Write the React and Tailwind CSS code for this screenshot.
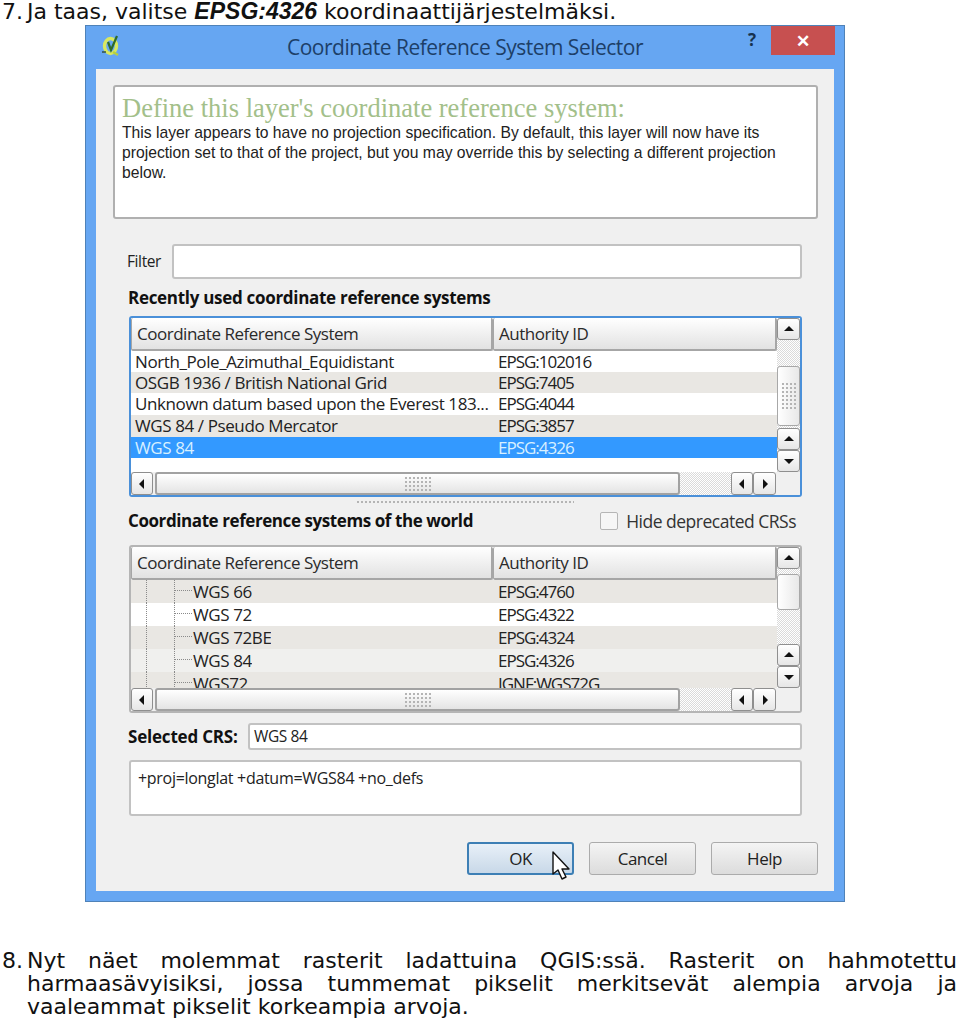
const UI = "font-['Open_Sans',sans-serif]";

const RECENT = [
  { name: "North_Pole_Azimuthal_Equidistant", id: "EPSG:102016", h: "h-[21px]" },
  { name: "OSGB 1936 / British National Grid", id: "EPSG:7405", h: "h-[21px]", alt: true },
  { name: "Unknown datum based upon the Everest 183...", id: "EPSG:4044", h: "h-[22px]" },
  { name: "WGS 84 / Pseudo Mercator", id: "EPSG:3857", h: "h-[22px]", alt: true },
  { name: "WGS 84", id: "EPSG:4326", h: "h-[21px]", selected: true },
];

const WORLD = [
  { name: "WGS 66", id: "EPSG:4760", h: "h-[23px]", alt: true },
  { name: "WGS 72", id: "EPSG:4322", h: "h-[23px]" },
  { name: "WGS 72BE", id: "EPSG:4324", h: "h-[23px]", alt: true },
  { name: "WGS 84", id: "EPSG:4326", h: "h-[23px]", soft: true },
  { name: "WGS72", id: "IGNF:WGS72G", h: "h-[17px]", alt: true },
];

function Arrow({ dir }) {
  const points = {
    up: "1,8 6,3 11,8",
    down: "1,4 6,9 11,4",
    left: "8,1 3,6 8,11",
    right: "4,1 9,6 4,11",
  };
  return (
    <svg width="12" height="12" viewBox="0 0 12 12">
      <polygon points={points[dir]} fill="#111" />
    </svg>
  );
}

function ScrollButton({ dir, className }) {
  return (
    <div className={`flex shrink-0 items-center justify-center rounded-[3px] border border-[#8f8f8f] bg-linear-to-b from-white to-[#e6e6e6] ${className}`}>
      <Arrow dir={dir} />
    </div>
  );
}

function Grip({ className }) {
  return <div className={`bg-[radial-gradient(#b4b4b4_1px,transparent_1px)] bg-[length:4px_4px] ${className}`} />;
}

function VerticalScroll({ thumbTop, thumbHeight, grip, gapBelow }) {
  return (
    <div className="flex w-[23px] shrink-0 flex-col bg-[repeating-conic-gradient(#dadada_0_25%,#ffffff_0_50%)] bg-[length:2px_2px]">
      <ScrollButton dir="up" className="h-[22px] w-[23px]" />
      <div className={`${thumbTop} ${thumbHeight} flex w-[23px] shrink-0 items-center justify-center rounded-[3px] border border-[#a8a8a8] bg-linear-to-r from-white to-[#e8e8e8]`}>
        {grip && <Grip className="h-[28px] w-[16px]" />}
      </div>
      <div className={`${gapBelow} shrink-0`} />
      <ScrollButton dir="up" className="h-[22px] w-[23px]" />
      <ScrollButton dir="down" className="h-[22px] w-[23px]" />
    </div>
  );
}

function HorizontalScroll() {
  return (
    <div className="flex h-[23px] shrink-0 items-stretch">
      <div className="flex w-[22px] shrink-0 items-center justify-center rounded-[3px] border border-[#8e8e8e] bg-linear-to-b from-white to-[#e6e6e6]">
        <Arrow dir="left" />
      </div>
      <div className="ml-[2px] flex w-[525px] shrink-0 items-center justify-center rounded-[3px] border-2 border-[#a2a2a2] bg-linear-to-b from-white to-[#e4e4e4]">
        <Grip className="h-[16px] w-[28px]" />
      </div>
      <div className="w-[51px] shrink-0 bg-[repeating-conic-gradient(#dadada_0_25%,#ffffff_0_50%)] bg-[length:2px_2px]" />
      <ScrollButton dir="left" className="w-[22px]" />
      <ScrollButton dir="right" className="w-[23px]" />
    </div>
  );
}

function HeaderCell({ label, className }) {
  return (
    <div className={`flex items-center rounded-[2px] border-r-2 border-b-2 border-l border-[#a6a6a6] bg-linear-to-b from-white to-[#e2e2e2] pl-[5px] text-[17px] tracking-[-0.48px] text-[#2a2a2a] ${className}`}>
      {label}
    </div>
  );
}

function Row({ row, tree }) {
  const bg = row.selected ? "bg-[#3399ff] text-[#d8f0ff]" : row.alt ? "bg-[#e9e7e3] text-[#222]" : row.soft ? "bg-[#f0f0ee] text-[#222]" : "bg-white text-[#222]";
  return (
    <div className={`flex shrink-0 overflow-hidden text-[17px] tracking-[-0.4px] ${tree ? "leading-[24px]" : "leading-[22px]"} ${row.h} ${bg}`}>
      {tree ? (
        <div className="flex w-[362px] shrink-0 items-stretch">
          <div className="w-[16px] shrink-0 border-r border-dotted border-[#8a8a8a]" />
          <div className="w-[28px] shrink-0 border-r border-dotted border-[#8a8a8a]" />
          <div className="h-[11px] w-[17px] shrink-0 border-b border-dotted border-[#8a8a8a]" />
          <span className="truncate pl-[1px]">{row.name}</span>
        </div>
      ) : (
        <span className="w-[362px] shrink-0 truncate pl-[4px]">{row.name}</span>
      )}
      <span className="pl-[5px] tracking-[-1px]">{row.id}</span>
    </div>
  );
}

function CrsTable({ rows, tree, focused, height, rowsHeight, scroll }) {
  return (
    <div className={`flex ${height} flex-col overflow-hidden rounded-[3px] border-2 ${focused ? "border-[#4a90d9]" : "border-[#b5b5b5]"} bg-white`}>
      <div className="flex min-h-0 flex-1">
        <div className="flex min-w-0 flex-1 flex-col">
          <div className="flex h-[33px] shrink-0">
            <HeaderCell label="Coordinate Reference System" className="w-[362px] shrink-0" />
            <HeaderCell label="Authority ID" className="flex-1" />
          </div>
          <div className={`flex ${rowsHeight} flex-col overflow-hidden`}>
            {rows.map((row) => (
              <Row key={row.name} row={row} tree={tree} />
            ))}
          </div>
        </div>
        {scroll}
      </div>
      <div className="flex shrink-0 bg-[#f0f0f0]">
        <div className="flex-1">
          <HorizontalScroll />
        </div>
        <div className="w-[24px] shrink-0" />
      </div>
    </div>
  );
}

// small QGIS mark: pale green Q with a dark leaf through it
function QgisIcon() {
  return (
    <svg width="20" height="24" viewBox="0 0 20 24">
      <ellipse cx="9.5" cy="13" rx="6" ry="7.5" fill="none" stroke="#d8e860" strokeWidth="3.4" />
      <path d="M7 9l3 8 6-14" fill="none" stroke="#2f6b2a" strokeWidth="2.2" />
      <path d="M12 19l5 3" stroke="#b6d040" strokeWidth="2.6" />
      <path d="M1 19h4" stroke="#2b4a3a" strokeWidth="1.4" />
    </svg>
  );
}

function Cursor() {
  return (
    <svg className="absolute top-[7px] left-[82px]" width="22" height="30" viewBox="0 0 22 30">
      <path d="M2 1v22l5-4 4 9 4-2-4-8h7z" fill="#fff" stroke="#111" strokeWidth="1.4" strokeLinejoin="round" />
    </svg>
  );
}

function DialogButton({ label, primary, children }) {
  const look = primary
    ? "border-2 border-[#3d7fb5] bg-linear-to-b from-[#e8f0f8] to-[#c8d8e8]"
    : "border border-[#ababab] bg-linear-to-b from-[#f4f4f4] to-[#dcdcdc]";
  return (
    <div className={`relative flex h-[33px] w-[107px] items-center justify-center rounded-[3px] text-[17px] tracking-[-0.5px] text-[#222] ${look}`}>
      {label}
      {children}
    </div>
  );
}

export default function App() {
  return (
    <div className="h-[1022px] w-[960px] overflow-hidden bg-white text-black">
      <div className="flex h-[25px] pl-[2px] font-['DejaVu_Sans',sans-serif] text-[22px] leading-[23px] text-[#111]">
        <span className="w-[25px] shrink-0">7.</span>
        <p>
          Ja taas, valitse{" "}
          <b className="font-['Liberation_Sans',sans-serif] text-[23px] italic">EPSG:4326</b> koordinaattijärjestelmäksi.
        </p>
      </div>

      <div className={`ml-[85px] flex h-[877px] w-[760px] flex-col border border-[#4f82b8] bg-[#66a6f2] ${UI}`}>
        {/* title bar */}
        <div className="grid h-[43px] shrink-0 grid-cols-[1fr_auto_1fr]">
          <div className="pt-[7px] pl-[15px]">
            <QgisIcon />
          </div>
          <div className="pt-[7px] text-[21px] leading-[28px] tracking-[-0.5px] text-[#1d3f68]">
            Coordinate Reference System Selector
          </div>
          <div className="flex items-start justify-end pr-[9px]">
            <span className="mt-[2px] mr-[15px] text-[17px] leading-[24px] font-bold text-[#16324f]">?</span>
            <div className="flex h-[29px] w-[64px] items-center justify-center bg-[#c75050] text-[17px] font-bold text-white">✕</div>
          </div>
        </div>

        {/* client area */}
        <div className="mr-[10px] ml-[10px] flex h-[822px] flex-col bg-[#f0f0f0]">
          <div className="mt-[16px] mr-[16px] ml-[17px] h-[134px] shrink-0 rounded-[3px] border-2 border-[#b0b0b0] bg-white pt-[6px] pl-[7px]">
            <div className="font-['Liberation_Serif',serif] text-[26.5px] leading-[30px] text-[#a3c08a]">
              Define this layer's coordinate reference system:
            </div>
            <p className="w-[660px] font-['Liberation_Sans',sans-serif] text-[15.7px] leading-[20px] text-[#222]">
              This layer appears to have no projection specification. By default, this layer will now have its projection set to that of the project, but you may override this by selecting a different projection below.
            </p>
          </div>

          <div className="mt-[25px] flex h-[35px] shrink-0 items-center pr-[32px] pl-[31px]">
            <span className="w-[45px] shrink-0 pt-[1px] text-[15.5px] tracking-[-0.4px] text-[#222]">Filter</span>
            <div className="h-full flex-1 rounded-[3px] border-2 border-[#c2c2c2] bg-white" />
          </div>

          <div className="mt-[8px] h-[22px] shrink-0 pl-[32px] text-[17px] leading-[22px] font-bold tracking-[-0.3px] text-[#111]">
            Recently used coordinate reference systems
          </div>

          <div className="mt-[7px] shrink-0 pr-[32px] pl-[33px]">
            <CrsTable
              rows={RECENT}
              focused
              height="h-[181px]"
              rowsHeight="h-[121px]"
              scroll={<VerticalScroll thumbTop="mt-[26px]" thumbHeight="h-[60px]" grip gapBelow="h-[2px]" />}
            />
          </div>

          <Grip className="mx-auto mt-[3px] h-[4px] w-[218px] shrink-0" />

          <div className="mt-[5px] flex h-[24px] shrink-0 items-center pr-[38px] pl-[32px]">
            <span className="flex-1 text-[17px] font-bold tracking-[-0.42px] text-[#111]">Coordinate reference systems of the world</span>
            <div className="mr-[8px] h-[18px] w-[18px] rounded-[2px] border border-[#b5b5b5] bg-[#f6f6f6]" />
            <span className="text-[17.5px] tracking-[-0.5px] text-[#333]">Hide deprecated CRSs</span>
          </div>

          <div className="mt-[12px] shrink-0 pr-[32px] pl-[33px]">
            <CrsTable
              rows={WORLD}
              tree
              height="h-[168px]"
              rowsHeight="h-[109px]"
              scroll={<VerticalScroll thumbTop="mt-[5px]" thumbHeight="h-[36px]" gapBelow="h-[34px]" />}
            />
          </div>

          <div className="mt-[10px] flex h-[27px] shrink-0 items-center pr-[32px] pl-[32px]">
            <span className="w-[120px] shrink-0 text-[17px] font-bold tracking-[-0.2px] text-[#111]">Selected CRS:</span>
            <div className="flex h-full flex-1 items-center rounded-[3px] border-2 border-[#c2c2c2] bg-white pl-[4px] text-[15.5px] tracking-[-0.4px] text-[#222]">
              WGS 84
            </div>
          </div>

          <div className="mt-[10px] mr-[32px] ml-[33px] h-[56px] shrink-0 rounded-[3px] border-2 border-[#c2c2c2] bg-white pt-[3px] pl-[7px] text-[16px] leading-[26px] tracking-[-0.3px] text-[#222]">
            +proj=longlat +datum=WGS84 +no_defs
          </div>

          <div className="mt-[26px] flex shrink-0 justify-end gap-[15px] pr-[16px]">
            <DialogButton label="OK" primary>
              <Cursor />
            </DialogButton>
            <DialogButton label="Cancel" />
            <DialogButton label="Help" />
          </div>
        </div>
      </div>

      <div className="mt-[47px] flex pl-[2px] font-['DejaVu_Sans',sans-serif] text-[22px] leading-[23px] text-[#111]">
        <span className="w-[25px] shrink-0">8.</span>
        <p className="w-[930px] text-justify">
          Nyt näet molemmat rasterit ladattuina QGIS:ssä. Rasterit on hahmotettu harmaasävyisiksi, jossa tummemat pikselit merkitsevät alempia arvoja ja vaaleammat pikselit korkeampia arvoja.
        </p>
      </div>
    </div>
  );
}
